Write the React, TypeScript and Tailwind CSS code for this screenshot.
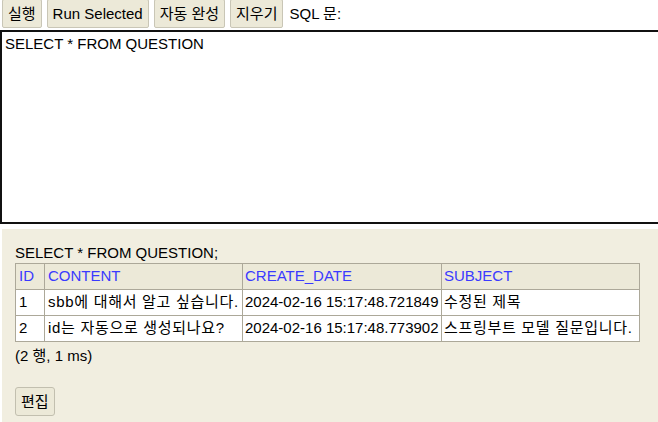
const font = { fontFamily: '"Liberation Sans", Arial, "Noto Sans CJK KR", sans-serif' };

const rows = [
    { id: '1', content: 'sbb에 대해서 알고 싶습니다.', date: '2024-02-16 15:17:48.721849', subject: '수정된 제목' },
    { id: '2', content: 'id는 자동으로 생성되나요?', date: '2024-02-16 15:17:48.773902', subject: '스프링부트 모델 질문입니다.' },
];

function ToolButton({ label }: { label: string }) {
    return (
        <button className="h-[29px] px-[5px] bg-[#ece9d8] border border-[#c9c6b6] rounded-[2px] text-[15px] text-black leading-none">
            {label}
        </button>
    );
}

export default function App() {
    return (
        <div className="w-[658px] h-[422px] overflow-hidden bg-white text-black text-[15px]" style={font}>
            {/* Toolbar */}
            <div className="flex items-center gap-[5px] pl-[2px] h-[29px] -mt-[1px]">
                <ToolButton label="실행" />
                <ToolButton label="Run Selected" />
                <ToolButton label="자동 완성" />
                <ToolButton label="지우기" />
                <span className="ml-[1px] leading-none">SQL 문:</span>
            </div>

            {/* SQL editor */}
            <div className="mt-[2px] h-[194px] border-2 border-r-0 border-[#111111] bg-white px-[3px] pt-[2px] leading-[19px]">
                SELECT * FROM QUESTION
            </div>

            {/* Result */}
            <div className="ml-[2px] mt-[5px] h-[200px] bg-[#f1eee0] pl-[13px] pt-[14px]">
                <div className="leading-[20px]">SELECT * FROM QUESTION;</div>
                <table className="border-collapse bg-white">
                    <thead>
                        <tr className="h-[26px] bg-[#ece9d8] text-[#3a3aff]">
                            <th className="w-[29px] border border-[#aca899] px-[3px] text-left font-normal">ID</th>
                            <th className="w-[198px] border border-[#aca899] px-[3px] text-left font-normal">CONTENT</th>
                            <th className="w-[199px] border border-[#aca899] px-[2px] text-left font-normal">CREATE_DATE</th>
                            <th className="w-[198px] border border-[#aca899] px-[2px] text-left font-normal">SUBJECT</th>
                        </tr>
                    </thead>
                    <tbody>
                        {rows.map(r => (
                            <tr key={r.id} className="h-[26px]">
                                <td className="border border-[#aca899] px-[3px]">{r.id}</td>
                                <td className="border border-[#aca899] px-[3px] whitespace-nowrap tracking-[0.7px]">{r.content}</td>
                                <td className="border border-[#aca899] px-[2px] whitespace-nowrap">{r.date}</td>
                                <td className="border border-[#aca899] px-[2px] whitespace-nowrap tracking-[0.7px]">{r.subject}</td>
                            </tr>
                        ))}
                    </tbody>
                </table>
                <div className="mt-[3px] leading-[21px]">(2 행, 1 ms)</div>
                <button className="mt-[21px] h-[29px] px-[5px] bg-[#ece9d8] border border-[#c2bfaf] rounded-[3px] leading-none">
                    편집
                </button>
            </div>
        </div>
    );
}
